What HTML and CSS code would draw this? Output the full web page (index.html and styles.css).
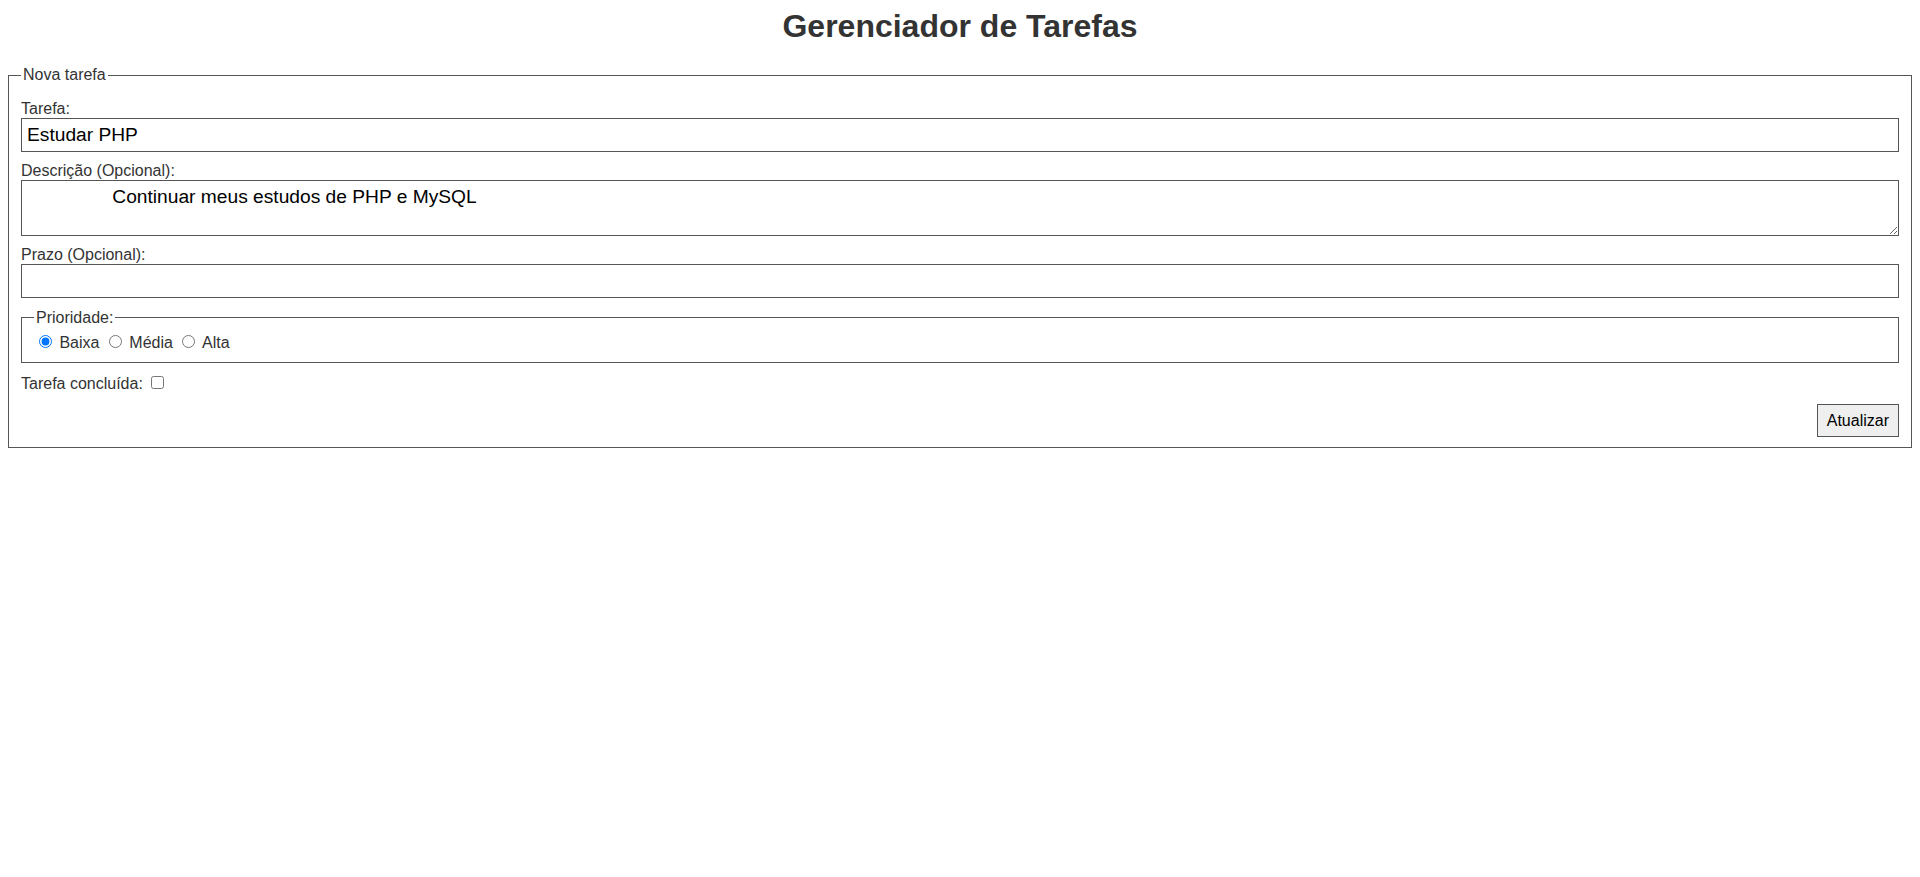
FILE: index.html
```html
<!DOCTYPE html>
<html lang="pt-BR">
<head>
<meta charset="utf-8">
<title>Gerenciador de Tarefas</title>
<link rel="stylesheet" href="styles.css">
</head>
<body>
<h1 class="title">Gerenciador de Tarefas</h1>
<form class="task-form">
  <fieldset class="box">
    <legend class="box-legend">Nova tarefa</legend>
    <div class="group">
      <label class="field-label" for="nome">Tarefa:</label>
      <input class="field" type="text" id="nome" value="Estudar PHP">
    </div>
    <div class="group">
      <label class="field-label" for="descricao">Descrição (Opcional):</label>
      <textarea class="field area" id="descricao" rows="2">                Continuar meus estudos de PHP e MySQL</textarea>
    </div>
    <div class="group">
      <label class="field-label" for="prazo">Prazo (Opcional):</label>
      <input class="field" type="text" id="prazo" value="">
    </div>
    <fieldset class="box inner">
      <legend class="box-legend">Prioridade:</legend>
      <label class="opt"><input class="radio" type="radio" name="prioridade" value="1" checked> Baixa</label>
      <label class="opt"><input class="radio" type="radio" name="prioridade" value="2"> Média</label>
      <label class="opt"><input class="radio" type="radio" name="prioridade" value="3"> Alta</label>
    </fieldset>
    <div class="group">
      <label class="check-label">Tarefa concluída: <input class="check" type="checkbox" name="concluida"></label>
    </div>
    <div class="group actions">
      <button class="btn" type="button">Atualizar</button>
    </div>
  </fieldset>
</form>
</body>
</html>
```
FILE: styles.css
```css
body {
  margin: 8px;
  font-family: "Liberation Sans", Arial, sans-serif;
  font-size: 16px;
  color: #333;
  background: #fff;
}

.title {
  margin: 0 0 21px;
  font-size: 32px;
  font-weight: bold;
  text-align: center;
  color: #333;
}

.task-form {
  margin: 0;
}

.box {
  margin: 0;
  padding: 0.35em 0.75em 0.625em;
  border: 1px solid #555;
  min-width: 0;
}

.box-legend {
  padding: 0 2px;
  color: #333;
}

.group {
  margin-top: 10px;
}

.field-label {
  display: block;
}

.field {
  display: block;
  width: 100%;
  box-sizing: border-box;
  padding: 5px;
  border: 1px solid #555;
  border-radius: 0;
  font-family: "Liberation Sans", Arial, sans-serif;
  font-size: 1.2em;
  color: #000;
  margin: 0;
}

.area {
  resize: vertical;
}

.inner {
  margin-top: 11px;
}

.opt {
  color: #333;
}

.radio {
  margin: 3px 3px 0 5px;
}

.check {
  margin: 3px 3px 3px 4px;
}

.actions {
  margin-top: 11px;
  text-align: right;
}

.btn {
  font-family: "Liberation Sans", Arial, sans-serif;
  font-size: 16px;
  padding: 6.5px 9px;
  background: #efefef;
  border: 1px solid #555;
  border-radius: 0;
  color: #000;
  margin: 0;
}
```
